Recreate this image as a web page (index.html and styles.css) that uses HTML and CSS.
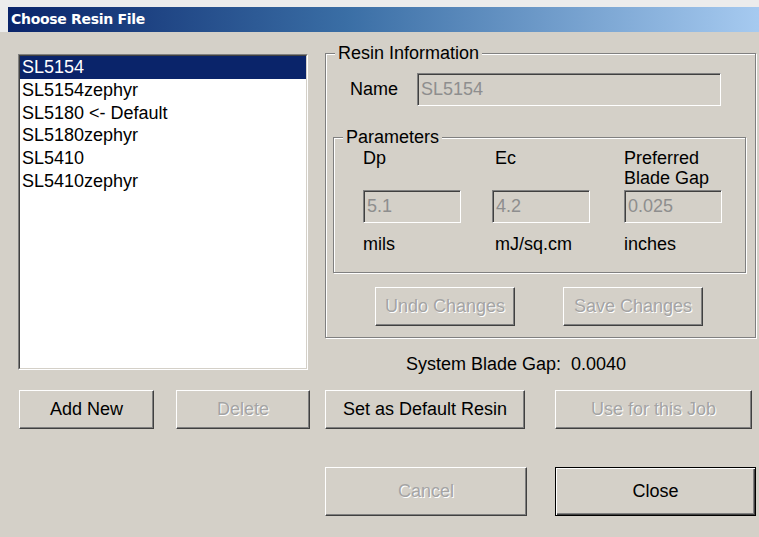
FILE: index.html
```html
<!DOCTYPE html>
<html lang="en">
<head>
<meta charset="utf-8">
<title>Choose Resin File</title>
<link rel="stylesheet" href="styles.css">
</head>
<body>
<div class="screen">
  <div class="frame-top"></div>
  <div class="caption-row"><div class="caption">Choose Resin File</div></div>
  <div class="dialog">
    <div class="top">
      <div class="listbox">
        <ul class="list">
          <li class="sel">SL5154</li>
          <li>SL5154zephyr</li>
          <li>SL5180 &lt;- Default</li>
          <li>SL5180zephyr</li>
          <li>SL5410</li>
          <li>SL5410zephyr</li>
        </ul>
      </div>
      <div class="side">
        <fieldset class="group info">
          <legend>Resin Information</legend>
          <div class="name-row">
            <span class="name-label">Name</span>
            <div class="field name-field">SL5154</div>
          </div>
          <fieldset class="group params">
            <legend>Parameters</legend>
            <div class="param-grid">
              <div class="plabel">Dp</div>
              <div class="plabel mid">Ec</div>
              <div class="plabel">Preferred<br>Blade Gap</div>
              <div class="field param-field">5.1</div>
              <div class="field param-field">4.2</div>
              <div class="field param-field">0.025</div>
              <div class="unit">mils</div>
              <div class="unit mid">mJ/sq.cm</div>
              <div class="unit">inches</div>
            </div>
          </fieldset>
          <div class="edit-buttons">
            <button class="btn edit-btn" disabled>Undo Changes</button>
            <button class="btn edit-btn" disabled>Save Changes</button>
          </div>
        </fieldset>
        <p class="sys-gap">System Blade Gap:&nbsp; 0.0040</p>
      </div>
    </div>
    <div class="row-actions">
      <button class="btn add-btn">Add New</button>
      <button class="btn del-btn" disabled>Delete</button>
      <button class="btn def-btn">Set as Default Resin</button>
      <button class="btn job-btn" disabled>Use for this Job</button>
    </div>
    <div class="row-dialog">
      <button class="btn cancel-btn" disabled>Cancel</button>
      <button class="btn close-btn default">Close</button>
    </div>
  </div>
</div>
</body>
</html>
```
FILE: styles.css
```css
* { box-sizing: border-box; }

body {
  margin: 0;
  background: #d4d0c8;
  font-family: "Liberation Sans", Arial, sans-serif;
  font-size: 18px;
  color: #000;
  width: 759px;
  height: 537px;
  overflow: hidden;
}

/* window frame and caption */
.frame-top {
  height: 7px;
  background: #ececec;
}
.caption-row {
  background: #ececec;
  padding-left: 8px;
}
.caption {
  height: 25px;
  line-height: 25px;
  padding-left: 3px;
  background: linear-gradient(to right, #0a246a 0%, #3a6ea5 45%, #a6caf0 100%);
  color: #fff;
  font-family: "DejaVu Sans", Verdana, sans-serif;
  font-weight: bold;
  font-size: 14px;
  letter-spacing: -0.3px;
}

.dialog {
  padding: 11px 0 0 18px;
}

.top {
  display: flex;
  align-items: flex-start;
}

/* resin list */
.listbox {
  margin-top: 11px;
  width: 290px;
  height: 316px;
  border: 1px solid;
  border-color: #808080 #fff #fff #808080;
}
.list {
  margin: 0;
  padding: 0;
  list-style: none;
  height: 100%;
  background: #fff;
  border: 1px solid;
  border-color: #404040 #d4d0c8 #d4d0c8 #404040;
}
.list li {
  height: 22.8px;
  line-height: 22.8px;
  padding-left: 2px;
  white-space: nowrap;
}
.list li.sel {
  background: #0a246a;
  color: #fff;
}

/* right column */
.side {
  margin-left: 17px;
  width: 431px;
}

.group {
  margin: 0;
  padding: 0;
  min-width: 0;
  border: 1px solid #808080;
  box-shadow: inset 1px 1px 0 #fff, 1px 1px 0 #fff;
}
.group legend {
  margin-left: 9px;
  padding: 0 3px;
  line-height: 20px;
  background: #d4d0c8;
}

.name-row {
  display: flex;
  align-items: center;
  margin-top: 10px;
  padding-left: 24px;
}
.name-label {
  width: 67px;
}

.field {
  height: 33px;
  display: flex;
  align-items: center;
  padding-left: 3px;
  border: 1px solid;
  border-color: #808080 #fff #fff #808080;
  box-shadow: inset 1px 1px 0 #404040, inset -1px -1px 0 #d4d0c8;
  color: #8e8e8e;
  white-space: nowrap;
}
.name-field {
  width: 304px;
}

.params {
  margin: 21px 9px 0 7px;
}
.param-grid {
  display: grid;
  grid-template-columns: 129px 132px 98px;
  padding: 1px 0 18px 29px;
}
.plabel {
  line-height: 20px;
  height: 40px;
}
.param-field {
  margin-top: 2px;
  width: 98px;
}
.unit {
  margin-top: 11px;
  line-height: 20px;
}
.mid {
  padding-left: 3px;
}

.edit-buttons {
  display: flex;
  gap: 48px;
  padding: 14px 0 11px 49px;
}

.sys-gap {
  margin: 16px 0 0;
  padding-left: 81px;
  line-height: 20px;
}

/* push buttons */
.btn {
  font-family: "Liberation Sans", Arial, sans-serif;
  font-size: 18px;
  color: #000;
  background: #d4d0c8;
  padding: 0;
  border: 1px solid;
  border-color: #fff #404040 #404040 #fff;
  box-shadow: inset -1px -1px 0 #808080;
  border-radius: 0;
  white-space: nowrap;
}
.btn:disabled {
  color: #a4a4a4;
  text-shadow: 1px 1px 0 #fff;
}
.btn.default {
  border: 1px solid #000;
  box-shadow: inset 1px 1px 0 #fff, inset -1px -1px 0 #404040, inset -2px -2px 0 #808080;
}

.edit-btn {
  width: 140px;
  height: 39px;
}

.row-actions {
  display: flex;
  margin-top: 16px;
}
.row-actions .btn {
  height: 39px;
}
.add-btn { width: 135px; margin-left: 1px; }
.del-btn { width: 134px; margin-left: 22px; }
.def-btn { width: 200px; margin-left: 15px; }
.job-btn { width: 197px; margin-left: 30px; }

.row-dialog {
  display: flex;
  margin-top: 38px;
  padding-left: 307px;
}
.row-dialog .btn {
  height: 49px;
}
.cancel-btn { width: 202px; }
.close-btn { width: 201px; margin-left: 28px; }
```
